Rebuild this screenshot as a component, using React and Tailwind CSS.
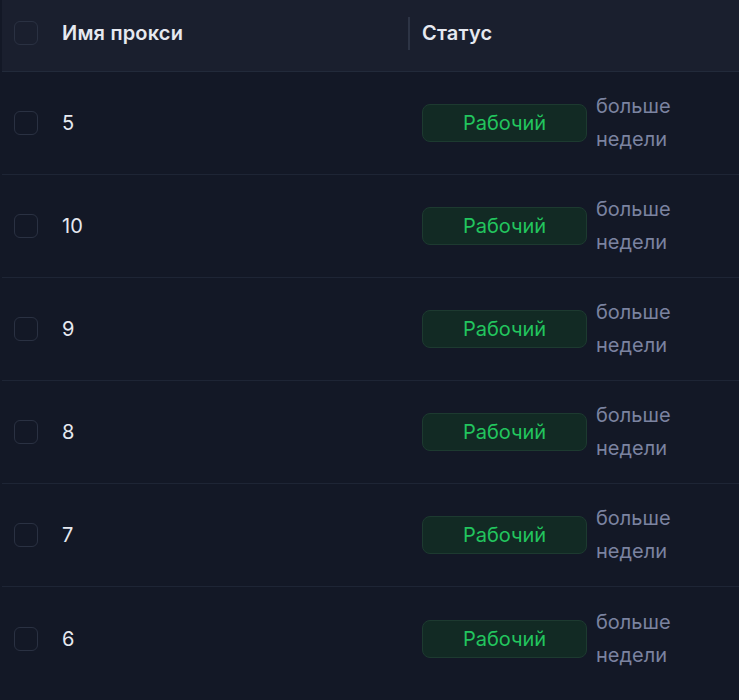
const rows = ["5", "10", "9", "8", "7", "6"];

function Checkbox() {
  return <div className="w-6 h-6 rounded-md border border-[#2a3142] shrink-0" />;
}

export default function App() {
  return (
    <div
      className="min-h-screen w-[739px] overflow-hidden bg-[#131826] pl-[2px]"
      style={{ fontFamily: "Inter, 'Noto Sans', sans-serif" }}
    >
      <div className="flex items-center h-[72px] pb-[5px] bg-[#1a1f2e] border-b border-[#222a3a]">
        <div className="pl-3 w-[60px] shrink-0">
          <Checkbox />
        </div>
        <div className="w-[346px] shrink-0 text-xl font-semibold tracking-[0.01em] text-[#e6e9f0]">Имя прокси</div>
        <div className="w-[2px] h-[33px] bg-[#2d3445] shrink-0" />
        <div className="pl-3 text-xl font-semibold tracking-[0.01em] text-[#e6e9f0]">Статус</div>
      </div>
      {rows.map((r) => (
        <div key={r} className="flex items-center h-[103px] border-b border-[#1e2535] last:border-b-0">
          <div className="pl-3 w-[60px] shrink-0">
            <Checkbox />
          </div>
          <div className="w-[348px] shrink-0 text-xl text-[#e6e9f0]">{r}</div>
          <div className="pl-3 flex items-center">
            <div className="w-[165px] h-[38px] rounded-lg bg-[#122a24] border border-[#1d3a30] flex items-center justify-center text-xl text-[#22c55e] shrink-0">
              Рабочий
            </div>
            <div className="pl-[9px] w-[115px] text-xl leading-[33px] text-[#7b83a0]">больше недели</div>
          </div>
        </div>
      ))}
    </div>
  );
}
